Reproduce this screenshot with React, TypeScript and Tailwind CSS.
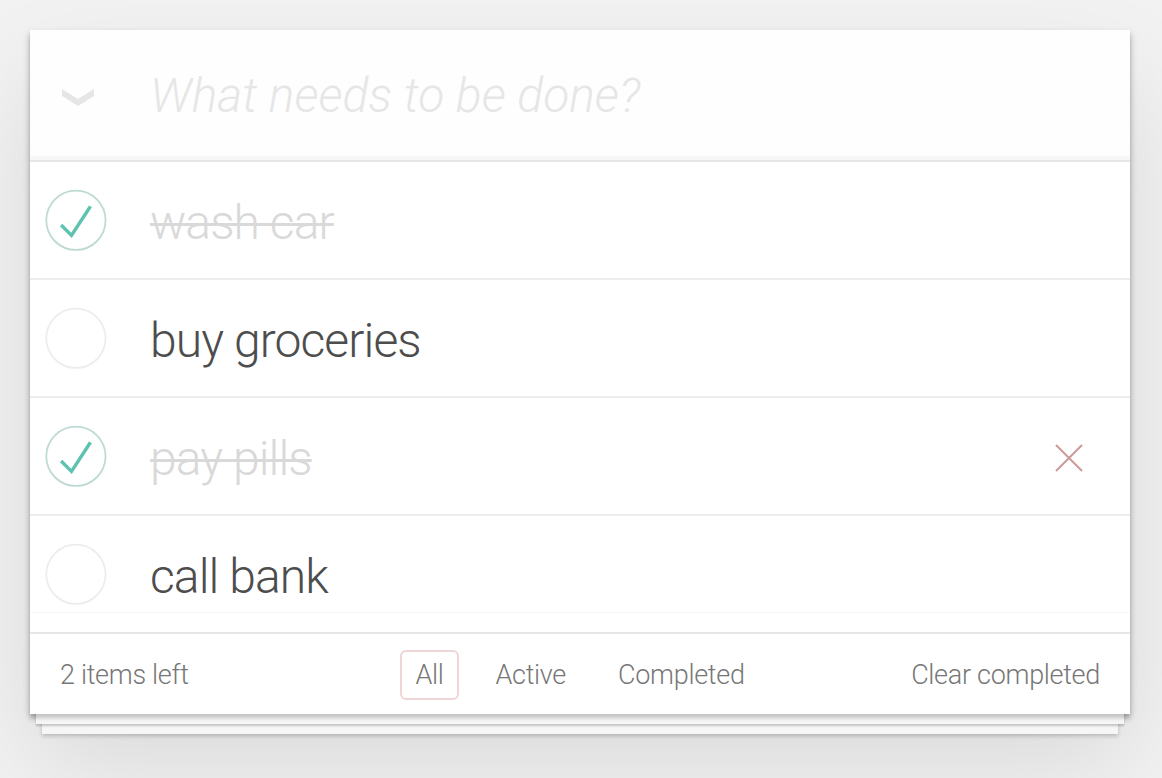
import { useState } from "react";

interface ITodo {
  id: number;
  title: string;
  completed: boolean;
}

const initialTodos: ITodo[] = [
  { id: 1, title: "wash car", completed: true },
  { id: 2, title: "buy groceries", completed: false },
  { id: 3, title: "pay pills", completed: true },
  { id: 4, title: "call bank", completed: false },
];

const filters = ["All", "Active", "Completed"];

const Toggle = ({ checked }: { checked: boolean }) => (
  <svg width="80" height="80" viewBox="-10 -18 100 135" className="shrink-0">
    <circle
      cx="50"
      cy="50"
      r="50"
      fill="none"
      stroke={checked ? "#bddad5" : "#ededed"}
      strokeWidth="3"
    />
    {checked && (
      <path fill="#5dc2af" d="M72 25L42 71 27 56l-4 4 20 20 34-52z" />
    )}
  </svg>
);

const TodoRow = ({
  todo,
  hovered,
  last,
}: {
  todo: ITodo;
  hovered: boolean;
  last?: boolean;
}) => (
  <li
    className={`flex items-start overflow-hidden ${
      last ? "h-[97px] border-b border-[#f7f7f7]" : "h-[118px] border-b-2 border-[#ededed]"
    }`}
  >
    <div className="flex h-[116px] w-full items-center">
      <div className="flex w-[120px] shrink-0 justify-start">
        <Toggle checked={todo.completed} />
      </div>
      <span
        className={`flex-1 pt-[5px] text-[48px] leading-[1.2] font-light tracking-[-0.9px] ${
          todo.completed
            ? "text-[#d9d9d9] line-through decoration-[3px]"
            : "text-[#4d4d4d]"
        }`}
      >
        {todo.title}
      </span>
      {hovered && (
        <div className="mt-[4px] mr-[46px] flex h-[30px] w-[30px] items-center justify-center">
          <svg width="30" height="30" viewBox="0 0 30 30">
            <path
              d="M2 2L28 28M28 2L2 28"
              stroke="#cc9a9a"
              strokeWidth="2"
              fill="none"
            />
          </svg>
        </div>
      )}
    </div>
  </li>
);

export default function App() {
  const [todos] = useState<ITodo[]>(initialTodos);
  const [filter] = useState("All");
  const left = todos.filter((t) => !t.completed).length;

  return (
    <div
      className="min-h-[778px] bg-[#f2f2f2] px-[30px] pt-[30px]"
      style={{ fontFamily: "Roboto, 'Liberation Sans', sans-serif" }}
    >
      <section className="w-[1100px] bg-white shadow-[0_4px_4px_rgba(0,0,0,0.2),0_16px_0_-6px_#f6f6f6,0_18px_2px_-6px_rgba(0,0,0,0.2),0_32px_0_-12px_#f6f6f6,0_34px_4px_-12px_rgba(0,0,0,0.2),0_4px_8px_0_rgba(0,0,0,0.2),0_50px_100px_0_rgba(0,0,0,0.1)]">
        <header className="flex h-[130px] items-center bg-[#fefefe] shadow-[inset_0_-4px_2px_rgba(0,0,0,0.03)]">
          <div className="flex w-[120px] justify-start pt-[3px] pl-[31px]">
            <svg width="34" height="22" viewBox="0 0 34 22">
              <path d="M1 3L17 13L33 3L33 10L17 20L1 10Z" fill="#e6e6e6" />
            </svg>
          </div>
          <input
            className="flex-1 bg-transparent pt-[2px] text-[48px] font-light outline-none placeholder:italic placeholder:text-[#e6e6e6]"
            placeholder="What needs to be done?"
          />
        </header>
        <ul className="border-t-2 border-[#e6e6e6]">
          {todos.map((todo, i) => (
            <TodoRow
              key={todo.id}
              todo={todo}
              hovered={todo.id === 3}
              last={i === todos.length - 1}
            />
          ))}
        </ul>
        <div className="h-[19px]" />
        <footer className="grid h-[82px] grid-cols-[1fr_auto_1fr] items-center border-t-2 border-[#e6e6e6] px-[30px] pt-[2px] text-[27px] font-light tracking-[-0.3px] text-[#777]">
          <span>{left} items left</span>
          <ul className="flex items-center gap-[10px]">
            {filters.map((f) => (
              <li key={f}>
                <a
                  className={`mx-[6px] block rounded-[6px] border-2 px-[13px] py-[3px] ${
                    f === filter
                      ? "border-[rgba(175,47,47,0.2)]"
                      : "border-transparent"
                  }`}
                >
                  {f}
                </a>
              </li>
            ))}
          </ul>
          <span className="text-right">Clear completed</span>
        </footer>
      </section>
    </div>
  );
}
